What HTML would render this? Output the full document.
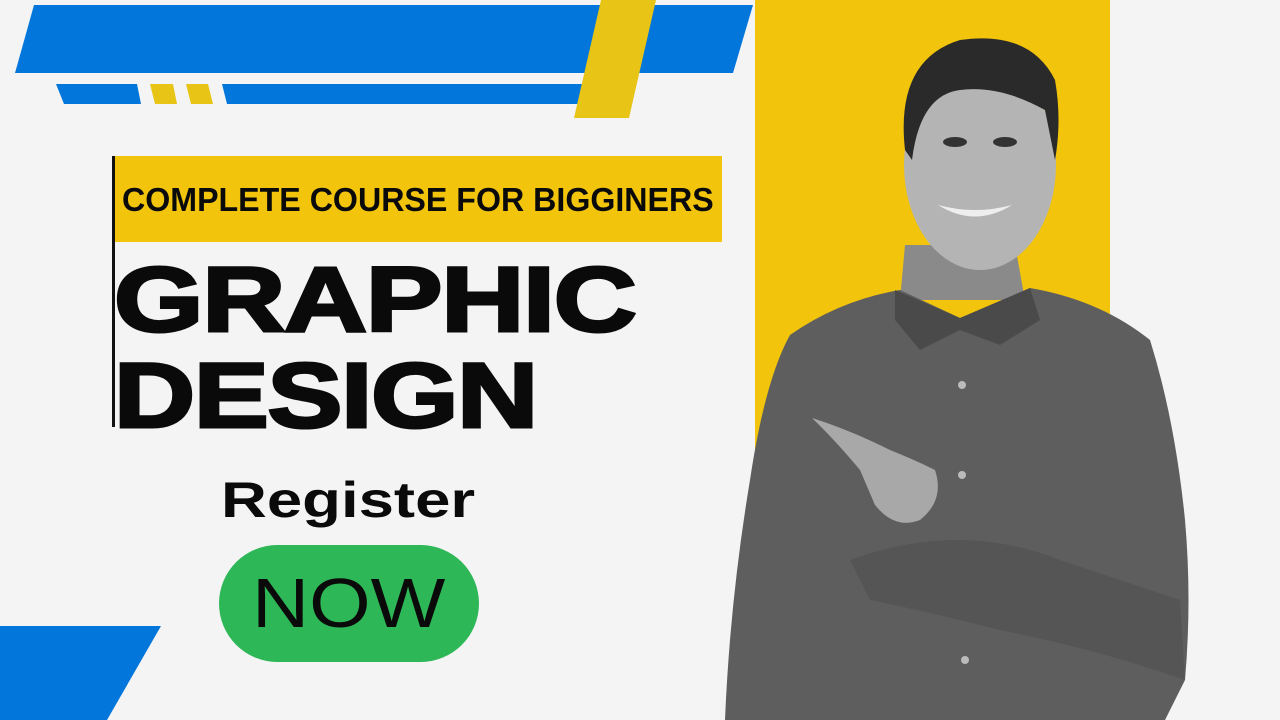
<!DOCTYPE html>
<html><head><meta charset="utf-8"><style>
html,body{margin:0;padding:0}
body{width:1280px;height:720px;background:#f4f4f4;position:relative;overflow:hidden;font-family:"Liberation Sans",sans-serif}
.t{position:absolute;white-space:nowrap;color:#0a0a0a}
</style></head><body>
<svg width="1280" height="720" style="position:absolute;left:0;top:0">
<polygon points="34,5 753,5 733,73 15,73" fill="#0376db"/>
<polygon points="56,84 137,84 141,104 64,104" fill="#0376db"/>
<polygon points="150,84 173,84 177,104 155,104" fill="#e8c416"/>
<polygon points="186,84 208,84 213,104 191,104" fill="#e8c416"/>
<polygon points="222,84 590,84 585,104 227,104" fill="#0376db"/>
<polygon points="601,0 656,0 629,118 574,118" fill="#e8c416"/>
<rect x="755" y="0" width="355" height="720" fill="#f2c40c"/>
<polygon points="0,626 161,626 107,720 0,720" fill="#0376db"/>
<rect x="115" y="156" width="607" height="86" fill="#f2c40c"/>
<rect x="112" y="156" width="3" height="271" fill="#111"/>
<rect x="219" y="545" width="260" height="117" rx="58.5" fill="#2db757"/>
<!-- person -->
<path d="M905,245 L1015,245 L1025,300 L900,300 Z" fill="#8a8a8a"/>
<path d="M790,335 Q840,300 900,290 L960,318 L1030,288 Q1100,300 1150,340 Q1175,420 1185,520 Q1192,600 1185,680 L1165,720 L725,720 Q730,600 750,480 Q765,380 790,335 Z" fill="#5e5e5e"/>
<path d="M895,290 L960,318 L1030,288 L1040,320 L1000,345 L960,330 L920,350 L895,320 Z" fill="#4a4a4a"/>
<path d="M850,560 Q960,520 1060,560 L1180,600 L1185,680 Q1100,650 1000,630 Q920,610 870,600 Z" fill="#555"/>
<path d="M812,418 Q850,430 890,450 Q915,460 935,470 Q945,500 920,520 Q895,530 875,505 L860,470 Q835,440 812,418 Z" fill="#a8a8a8"/>
<ellipse cx="980" cy="165" rx="76" ry="105" fill="#b4b4b4"/>
<path d="M905,150 Q895,60 960,40 Q1030,30 1055,80 Q1062,120 1055,160 L1045,110 Q1000,85 960,90 Q920,95 912,160 Z" fill="#2a2a2a"/>
<ellipse cx="955" cy="142" rx="12" ry="5" fill="#333"/>
<ellipse cx="1005" cy="142" rx="12" ry="5" fill="#333"/>
<path d="M938,205 Q975,228 1012,205 Q975,215 938,205 Z" fill="#eee"/>
<circle cx="962" cy="385" r="4" fill="#bbb"/><circle cx="962" cy="475" r="4" fill="#bbb"/><circle cx="965" cy="660" r="4" fill="#bbb"/>
</svg>
<div class="t" style="left:122px;top:180px;font-size:33px;font-weight:bold;transform:scaleX(0.975);transform-origin:0 0;line-height:40px">COMPLETE COURSE FOR BIGGINERS</div>
<div class="t" style="left:114px;top:252px;font-size:92px;font-weight:900;line-height:96px;transform:scaleX(1.25);transform-origin:0 0;letter-spacing:-1px;-webkit-text-stroke:3px #0a0a0a">GRAPHIC</div>
<div class="t" style="left:114px;top:348px;font-size:92px;font-weight:900;line-height:96px;transform:scaleX(1.22);transform-origin:0 0;letter-spacing:-1px;-webkit-text-stroke:3px #0a0a0a">DESIGN</div>
<div class="t" style="left:221px;top:470px;font-size:50px;font-weight:bold;line-height:60px;transform:scaleX(1.27);transform-origin:0 0">Register</div>
<div class="t" style="left:252px;top:565px;font-size:70px;line-height:76px;font-weight:normal;transform:scaleX(1.13);transform-origin:0 0">NOW</div>
</body></html>
